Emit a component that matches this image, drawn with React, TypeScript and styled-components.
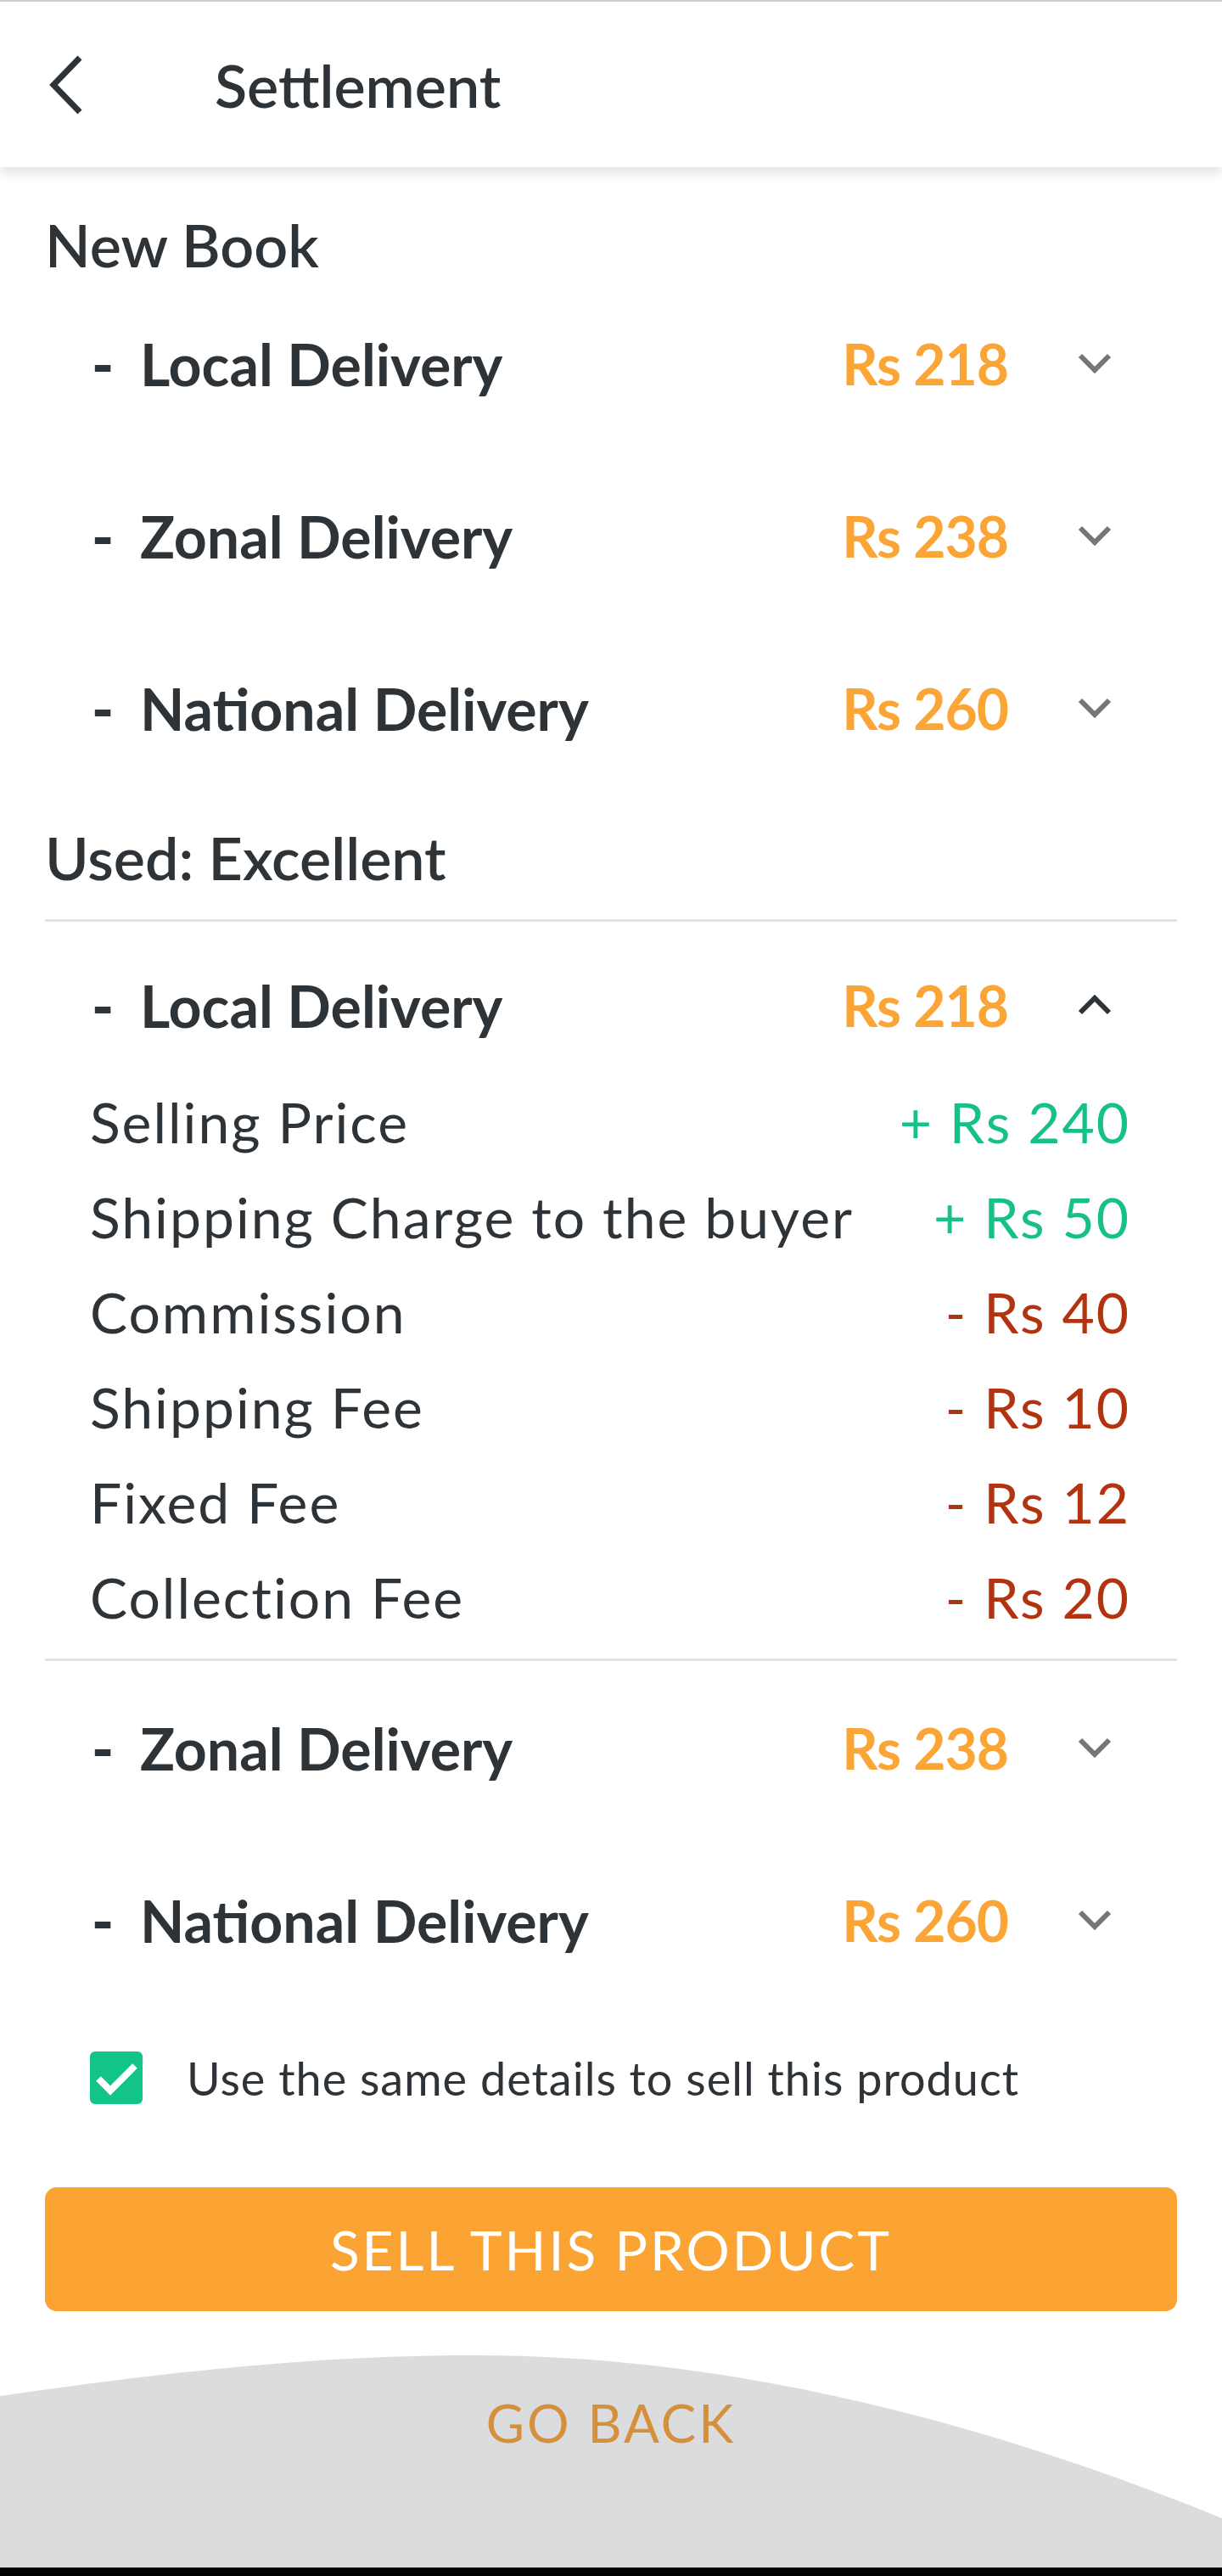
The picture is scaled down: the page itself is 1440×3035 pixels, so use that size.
import React, { useState } from "react";
import styled, { createGlobalStyle } from "styled-components";

const GlobalStyle = createGlobalStyle`
  html, body {
    margin: 0;
    padding: 0;
    background: #ffffff;
  }
  body {
    font-family: Lato, "Open Sans", "Liberation Sans", sans-serif;
    color: #2e3338;
  }
  * {
    box-sizing: border-box;
  }
`;

interface Charge {
  label: string;
  amount: number;
}

interface DeliveryOption {
  name: string;
  total: number;
  charges?: Charge[];
}

const options: DeliveryOption[] = [
  { name: "Local Delivery", total: 218 },
  { name: "Zonal Delivery", total: 238 },
  { name: "National Delivery", total: 260 },
];

const localCharges: Charge[] = [
  { label: "Selling Price", amount: 240 },
  { label: "Shipping Charge to the buyer", amount: 50 },
  { label: "Commission", amount: -40 },
  { label: "Shipping Fee", amount: -10 },
  { label: "Fixed Fee", amount: -12 },
  { label: "Collection Fee", amount: -20 },
];

function Chevron({ up }: { up?: boolean }) {
  return (
    <ChevronBox $up={up}>
      <svg width="40" height="24" viewBox="0 0 40 24" fill="none">
        <path
          d={up ? "M3 21 L20 4 L37 21" : "M3 3 L20 20 L37 3"}
          stroke="currentColor"
          strokeWidth="6"
        />
      </svg>
    </ChevronBox>
  );
}

function DeliveryRow({
  option,
  open,
  onToggle,
}: {
  option: DeliveryOption;
  open?: boolean;
  onToggle: () => void;
}) {
  return (
    <Row onClick={onToggle}>
      <Dash>-</Dash>
      <DeliveryName>{option.name}</DeliveryName>
      <Price>Rs {option.total}</Price>
      <Chevron up={open} />
    </Row>
  );
}

function Breakdown({ charges }: { charges: Charge[] }) {
  return (
    <ChargeList>
      {charges.map((c) => (
        <ChargeRow key={c.label}>
          <ChargeLabel>{c.label}</ChargeLabel>
          <ChargeValue $positive={c.amount > 0}>
            {c.amount > 0 ? "+" : "-"} Rs {Math.abs(c.amount)}
          </ChargeValue>
        </ChargeRow>
      ))}
    </ChargeList>
  );
}

export default function App() {
  const [openUsed, setOpenUsed] = useState("Local Delivery");
  const [sameDetails, setSameDetails] = useState(true);

  const toggleUsed = (name: string) => {
    setOpenUsed(openUsed === name ? "" : name);
  };

  const usedOpen = options.find((o) => o.name === openUsed);

  return (
    <Page>
      <GlobalStyle />
      <Header>
        <BackButton aria-label="Back">
          <svg width="42" height="70" viewBox="0 0 42 70" fill="none">
            <path d="M38 3 L7 35 L38 67" stroke="#2e3338" strokeWidth="7" />
          </svg>
        </BackButton>
        <Title>Settlement</Title>
      </Header>

      <Content>
        <SectionTitle $top={41}>New Book</SectionTitle>
        <List $top={30}>
          {options.map((o) => (
            <DeliveryRow key={o.name} option={o} onToggle={() => {}} />
          ))}
        </List>

        <SectionTitle $top={66}>Used: Excellent</SectionTitle>
        <Divider $top={23} />
        <List $top={38}>
          {usedOpen && (
            <DeliveryRow
              option={usedOpen}
              open
              onToggle={() => toggleUsed(usedOpen.name)}
            />
          )}
        </List>
        {usedOpen && <Breakdown charges={localCharges} />}
        <Divider $top={17} />
        <List $top={42}>
          {options
            .filter((o) => o.name !== openUsed)
            .map((o) => (
              <DeliveryRow
                key={o.name}
                option={o}
                onToggle={() => toggleUsed(o.name)}
              />
            ))}
        </List>

        <CheckRow onClick={() => setSameDetails(!sameDetails)}>
          <CheckBox $checked={sameDetails}>
            {sameDetails && (
              <svg width="62" height="62" viewBox="0 0 62 62" fill="none">
                <path
                  d="M10 32 L24 46 L53 17"
                  stroke="#ffffff"
                  strokeWidth="8"
                />
              </svg>
            )}
          </CheckBox>
          <CheckLabel>Use the same details to sell this product</CheckLabel>
        </CheckRow>

        <SellButton>SELL THIS PRODUCT</SellButton>
      </Content>

      <Footer>
        <Wave viewBox="0 0 1440 302" preserveAspectRatio="none">
          <path
            d="M0 100 C 260 62 420 52 560 52 C 860 52 1160 130 1440 244 L1440 302 L0 302 Z"
            fill="#dbdcde"
          />
        </Wave>
        <GoBack>GO BACK</GoBack>
      </Footer>
      <NavBar />
    </Page>
  );
}

const Page = styled.div`
  width: 1440px;
  height: 3035px;
  display: flex;
  flex-direction: column;
  background: #ffffff;
  overflow: hidden;
`;

const Header = styled.header`
  height: 197px;
  flex-shrink: 0;
  display: flex;
  align-items: center;
  padding-left: 56px;
  border-top: 2px solid #cbcbcb;
  background: #ffffff;
  box-shadow: 0 6px 14px rgba(0, 0, 0, 0.13);
  position: relative;
  z-index: 1;
`;

const BackButton = styled.button`
  display: flex;
  border: none;
  background: none;
  padding: 0;
  cursor: pointer;
`;

const Title = styled.h1`
  margin: 0 0 0 155px;
  font-size: 70px;
  font-weight: 600;
  color: #2e3338;
`;

const Content = styled.main`
  padding: 0 53px;
  display: flex;
  flex-direction: column;
`;

const SectionTitle = styled.h2<{ $top: number }>`
  margin: ${(p) => p.$top}px 0 0;
  height: 100px;
  display: flex;
  align-items: center;
  font-size: 70px;
  font-weight: 600;
  color: #2e3338;
`;

const Divider = styled.hr<{ $top: number }>`
  margin: ${(p) => p.$top}px 0 0;
  border: none;
  height: 3px;
  background: #e2e2e2;
`;

const List = styled.div<{ $top: number }>`
  margin-top: ${(p) => p.$top}px;
  display: flex;
  flex-direction: column;
  gap: 83px;
`;

const Row = styled.div`
  height: 120px;
  display: flex;
  align-items: center;
  padding-left: 55px;
  cursor: pointer;
`;

const Dash = styled.span`
  width: 57px;
  font-size: 70px;
  font-weight: 900;
  color: #2e3338;
`;

const DeliveryName = styled.span`
  flex: 1;
  font-size: 68px;
  font-weight: 700;
  color: #2e3338;
`;

const Price = styled.span`
  font-size: 66px;
  font-weight: 700;
  letter-spacing: -1px;
  color: #fba536;
`;

const ChevronBox = styled.span<{ $up?: boolean }>`
  display: flex;
  margin: 0 77px 0 82px;
  color: ${(p) => (p.$up ? "#2e3338" : "#767676")};
`;

const ChargeList = styled.div`
  margin-top: 21px;
  display: flex;
  flex-direction: column;
`;

const ChargeRow = styled.div`
  height: 112px;
  display: flex;
  align-items: center;
  justify-content: space-between;
  padding: 0 55px 0 53px;
  font-size: 66px;
  letter-spacing: 2px;
`;

const ChargeLabel = styled.span`
  color: #2e3338;
`;

const ChargeValue = styled.span<{ $positive: boolean }>`
  color: ${(p) => (p.$positive ? "#17c08a" : "#b1330f")};
`;

const CheckRow = styled.label`
  margin-top: 95px;
  height: 62px;
  display: flex;
  align-items: center;
  padding-left: 53px;
  cursor: pointer;
`;

const CheckBox = styled.span<{ $checked: boolean }>`
  width: 62px;
  height: 62px;
  flex-shrink: 0;
  display: flex;
  border-radius: 6px;
  background: ${(p) => (p.$checked ? "#12c487" : "#ffffff")};
  border: ${(p) => (p.$checked ? "none" : "4px solid #999999")};
`;

const CheckLabel = styled.span`
  margin-left: 52px;
  font-size: 54px;
  letter-spacing: 1px;
  color: #2e3338;
`;

const SellButton = styled.button`
  margin-top: 98px;
  height: 146px;
  width: 100%;
  border: none;
  border-radius: 14px;
  background: #fba433;
  color: #ffffff;
  font-family: inherit;
  font-size: 64px;
  letter-spacing: 3px;
  cursor: pointer;
`;

const Footer = styled.footer`
  margin-top: auto;
  height: 302px;
  position: relative;
  display: flex;
  justify-content: center;
  padding-top: 94px;
`;

const Wave = styled.svg`
  position: absolute;
  left: 0;
  top: 0;
  width: 100%;
  height: 100%;
`;

const GoBack = styled.span`
  position: relative;
  height: fit-content;
  font-size: 62px;
  letter-spacing: 3px;
  color: #d6903b;
  cursor: pointer;
`;

const NavBar = styled.div`
  height: 10px;
  flex-shrink: 0;
  background: #000000;
`;
